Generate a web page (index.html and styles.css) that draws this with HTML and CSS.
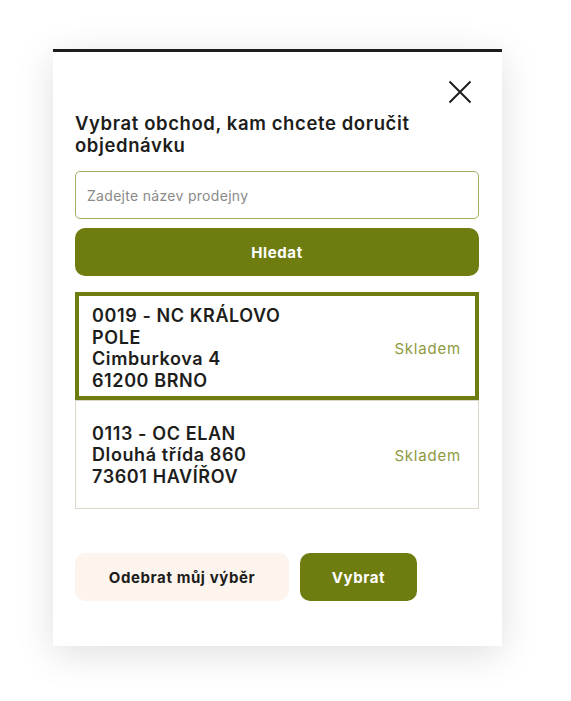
FILE: index.html
```html
<html>

<head>
  <title>Výběr prodejny</title>
  <link rel="stylesheet" href="styles.css">
</head>

<body>
  <div id="modal">
    <div class="modal-head">
      <button class="close" aria-label="Zavřít">
        <svg width="24" height="24" viewBox="0 0 24 24">
          <path d="M1.5 1.5 L22.5 22.5 M22.5 1.5 L1.5 22.5" stroke="#1d1d1b" stroke-width="2" fill="none" />
        </svg>
      </button>
    </div>
    <h2>Vybrat obchod, kam chcete doručit objednávku</h2>
    <div class="search">
      <input id="query" type="text" placeholder="Zadejte název prodejny">
      <button class="btn btn-primary btn-wide">Hledat</button>
    </div>
    <div class="stores">
      <div class="store selected">
        <div class="store-name">0019 - NC KRÁLOVO<br>POLE<br>Cimburkova 4<br>61200 BRNO</div>
        <div class="stock">Skladem</div>
      </div>
      <div class="store">
        <div class="store-name">0113 - OC ELAN<br>Dlouhá třída 860<br>73601 HAVÍŘOV</div>
        <div class="stock">Skladem</div>
      </div>
    </div>
    <div class="actions">
      <button class="btn btn-light">Odebrat můj výběr</button>
      <button class="btn btn-primary btn-small">Vybrat</button>
    </div>
  </div>
</body>

</html>
```

FILE: styles.css
```css
body {
  margin: 0;
  padding: 49px 0 0 53px;
  font-family: 'Inter', sans-serif;
  color: #1d1d1b;
  background: #fff;
}

#modal {
  width: 449px;
  height: 597px;
  box-sizing: border-box;
  border-top: 3px solid #1d1d1b;
  background: #fff;
  padding: 0 23px 0 22px;
  box-shadow: 0 8px 36px rgba(0, 0, 0, 0.13);
}

.modal-head {
  display: flex;
  justify-content: flex-end;
  padding: 28px 7px 0 0;
}

.close {
  border: none;
  background: none;
  padding: 0;
  width: 24px;
  height: 24px;
}

.close svg {
  display: block;
}

h2 {
  margin: 8px 0 0;
  font-size: 18.5px;
  font-weight: 600;
  letter-spacing: 0.6px;
  line-height: 22px;
  padding-right: 20px;
}

.search {
  margin-top: 15px;
  display: flex;
  flex-direction: column;
  gap: 9px;
}

#query {
  height: 48px;
  box-sizing: border-box;
  border: 1px solid #a4ad5e;
  border-radius: 5px;
  padding: 0 11px;
  font-family: 'Inter', sans-serif;
  font-size: 14px;
  letter-spacing: 0.3px;
  color: #1d1d1b;
}

#query::placeholder {
  color: #8a8a88;
}

.btn {
  height: 48px;
  border: none;
  border-radius: 10px;
  font-family: 'Inter', sans-serif;
  font-weight: 700;
  font-size: 15px;
  letter-spacing: 0.6px;
}

.btn-primary {
  background: #6f7c10;
  color: #fff;
}

.btn-wide {
  width: 100%;
}

.btn-light {
  background: #fdf4ee;
  color: #1d1d1b;
  width: 214px;
}

.btn-small {
  width: 117px;
}

.stores {
  margin-top: 16px;
}

.store {
  display: flex;
  align-items: center;
  min-height: 109px;
  box-sizing: border-box;
  border: 1px solid #ddd8cb;
  padding: 10px 17px 9px 16px;
}

.store.selected {
  min-height: 108px;
  border: 4px solid #6f7c10;
  padding: 9px 14px 5px 13px;
}

.store-name {
  flex: 1;
  font-size: 18px;
  font-weight: 600;
  letter-spacing: 0.6px;
  line-height: 21.5px;
}

.stock {
  font-size: 15px;
  letter-spacing: 0.8px;
  color: #8e9a3e;
}

.actions {
  margin-top: 44px;
  display: flex;
  gap: 11px;
}
```
